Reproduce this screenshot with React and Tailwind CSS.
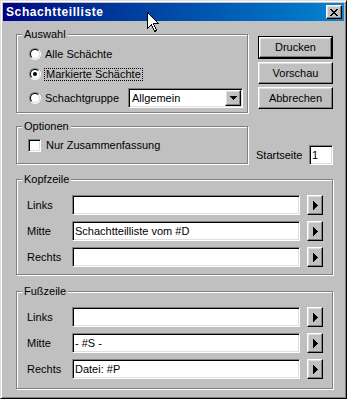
import React from "react";

const raised =
  "bg-[#c0c0c0] border border-t-white border-l-white border-r-black border-b-black shadow-[inset_-1px_-1px_0_#808080,inset_1px_1px_0_#dfdfdf]";
const sunken =
  "bg-white border border-t-[#808080] border-l-[#808080] border-r-white border-b-white shadow-[inset_1px_1px_0_#000,inset_-1px_-1px_0_#dfdfdf]";
const etched =
  "relative border border-[#808080] shadow-[inset_1px_1px_0_#fff,1px_1px_0_#fff]";

function Group({ label, className, children }) {
  return (
    <div className={etched + " " + className}>
      <span className="absolute -top-[7px] left-[5px] bg-[#c0c0c0] px-[2px] leading-[13px]">
        {label}
      </span>
      {children}
    </div>
  );
}

function Radio({ checked }) {
  return (
    <div className="w-[12px] h-[12px] shrink-0 rounded-full border border-t-[#808080] border-l-[#808080] border-r-white border-b-white">
      <div className="w-full h-full rounded-full border border-t-black border-l-black border-r-[#dfdfdf] border-b-[#dfdfdf] bg-white flex items-center justify-center">
        {checked && <div className="w-[4px] h-[4px] rounded-full bg-black" />}
      </div>
    </div>
  );
}

function Btn({ children, def }) {
  if (def) {
    return (
      <div className="w-[75px] h-[23px] border border-black">
        <div className={raised + " w-full h-full flex items-center justify-center"}>
          {children}
        </div>
      </div>
    );
  }
  return (
    <div className={raised + " w-[75px] h-[22px] flex items-center justify-center"}>
      {children}
    </div>
  );
}

function ArrowBtn() {
  return (
    <div className={raised + " w-[16px] h-[20px] flex items-center justify-center"}>
      <svg width="5" height="9" viewBox="0 0 5 9" shapeRendering="crispEdges">
        <rect x="0" y="0" width="1" height="9" fill="#000" />
        <rect x="1" y="1" width="1" height="7" fill="#000" />
        <rect x="2" y="2" width="1" height="5" fill="#000" />
        <rect x="3" y="3" width="1" height="3" fill="#000" />
        <rect x="4" y="4" width="1" height="1" fill="#000" />
      </svg>
    </div>
  );
}

function FieldRow({ label, value }) {
  return (
    <div className="flex items-center h-[20px]">
      <div className="w-[45px] leading-[13px]">{label}</div>
      <div className={sunken + " w-[228px] h-[20px] pl-[2px] flex items-center leading-[13px]"}>
        {value}
      </div>
      <div className="ml-[7px]">
        <ArrowBtn />
      </div>
    </div>
  );
}

export default function App() {
  return (
    <div className="w-[347px] h-[399px] bg-[#c0c0c0] border border-t-[#dfdfdf] border-l-[#dfdfdf] border-r-black border-b-black shadow-[inset_1px_1px_0_#fff,inset_-1px_-1px_0_#808080] p-[2px] relative font-['Liberation_Sans',Arial,sans-serif] text-[11px] text-black overflow-hidden">
      {/* Title bar */}
      <div className="h-[18px] bg-linear-to-r from-[#000080] to-[#1084d0] flex items-center pl-[3px] pr-[2px]">
        <span className="text-white font-bold text-[12px] leading-[14px] tracking-[0.6px]">
          Schachtteilliste
        </span>
        <div className={raised + " ml-auto w-[16px] h-[14px] flex items-center justify-center"}>
          <svg width="8" height="7" viewBox="0 0 8 7" shapeRendering="crispEdges">
            <rect x="0" y="0" width="2" height="1" fill="#000" />
            <rect x="6" y="0" width="2" height="1" fill="#000" />
            <rect x="1" y="1" width="2" height="1" fill="#000" />
            <rect x="5" y="1" width="2" height="1" fill="#000" />
            <rect x="2" y="2" width="4" height="1" fill="#000" />
            <rect x="3" y="3" width="2" height="1" fill="#000" />
            <rect x="2" y="4" width="4" height="1" fill="#000" />
            <rect x="1" y="5" width="2" height="1" fill="#000" />
            <rect x="5" y="5" width="2" height="1" fill="#000" />
            <rect x="0" y="6" width="2" height="1" fill="#000" />
            <rect x="6" y="6" width="2" height="1" fill="#000" />
          </svg>
        </div>
      </div>

      {/* Body */}
      <div className="pl-[13px] pt-[13px]">
        <div className="flex">
          {/* Left column */}
          <div className="w-[232px]">
            <Group label="Auswahl" className="h-[79px] pt-[9px] pl-[12px] pr-[4px]">
              <div className="flex items-center h-[20px]">
                <Radio />
                <span className="ml-[4px] leading-[13px]">Alle Schächte</span>
              </div>
              <div className="flex items-center h-[20px]">
                <Radio checked />
                <span className="ml-[3px] px-[1px] border border-dotted border-black leading-[11px]">
                  Markierte Schächte
                </span>
              </div>
              <div className="flex items-center h-[20px] mt-[4px]">
                <Radio />
                <span className="ml-[4px] leading-[13px]">Schachtgruppe</span>
                <div className={sunken + " ml-auto w-[115px] h-[20px] flex items-center pl-[3px] pr-[1px]"}>
                  <span className="leading-[13px]">Allgemein</span>
                  <div className={raised + " ml-auto w-[16px] h-[16px] flex items-center justify-center"}>
                    <svg width="7" height="4" viewBox="0 0 7 4" shapeRendering="crispEdges">
                      <rect x="0" y="0" width="7" height="1" fill="#000" />
                      <rect x="1" y="1" width="5" height="1" fill="#000" />
                      <rect x="2" y="2" width="3" height="1" fill="#000" />
                      <rect x="3" y="3" width="1" height="1" fill="#000" />
                    </svg>
                  </div>
                </div>
              </div>
            </Group>

            <Group label="Optionen" className="mt-[13px] h-[38px] pt-[12px] pl-[11px]">
              <div className="flex items-center h-[13px]">
                <div className={sunken + " w-[13px] h-[13px] shrink-0"} />
                <span className="ml-[5px] leading-[13px]">Nur Zusammenfassung</span>
              </div>
            </Group>
          </div>

          {/* Right column */}
          <div className="ml-[8px] w-[77px] pt-[2px]">
            <div className="pl-[2px]">
              <Btn def>Drucken</Btn>
              <div className="mt-[3px]">
                <Btn>Vorschau</Btn>
              </div>
              <div className="mt-[3px]">
                <Btn>Abbrechen</Btn>
              </div>
            </div>
            <div className="mt-[36px] flex items-center h-[20px]">
              <span className="leading-[13px]">Startseite</span>
              <div className={sunken + " ml-auto w-[24px] h-[20px] pl-[2px] flex items-center leading-[13px]"}>
                1
              </div>
            </div>
          </div>
        </div>

        <Group label="Kopfzeile" className="mt-[14px] w-[317px] h-[96px] pt-[15px] pl-[10px] flex flex-col gap-[6px]">
          <FieldRow label="Links" value="" />
          <FieldRow label="Mitte" value="Schachtteilliste vom #D" />
          <FieldRow label="Rechts" value="" />
        </Group>

        <Group label="Fußzeile" className="mt-[16px] w-[317px] h-[98px] pt-[15px] pl-[10px] flex flex-col gap-[6px]">
          <FieldRow label="Links" value="" />
          <FieldRow label="Mitte" value="- #S -" />
          <FieldRow label="Rechts" value="Datei: #P" />
        </Group>
      </div>

      {/* Mouse cursor */}
      <svg
        className="absolute left-[146px] top-[11px]"
        width="13"
        height="21"
        viewBox="0 0 13 21"
      >
        <path
          d="M0.5 0.5 L0.5 16.5 L4.5 12.5 L7.5 19.5 L9.5 18.5 L6.5 11.5 L11.5 11.5 Z"
          fill="#fff"
          stroke="#000"
          strokeWidth="1"
          shapeRendering="crispEdges"
        />
      </svg>
    </div>
  );
}
